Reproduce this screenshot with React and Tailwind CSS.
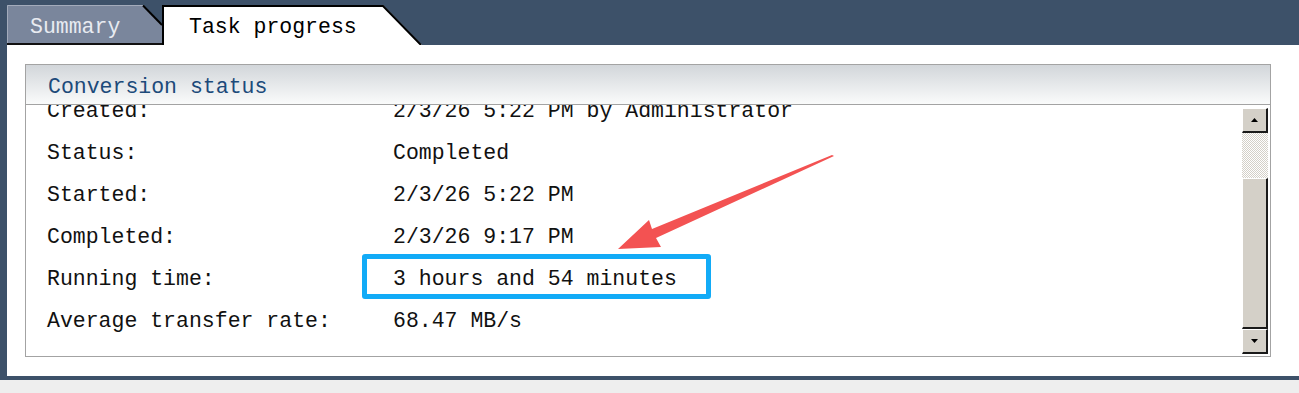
import React from "react";

const rows = [
    ["Created:", "2/3/26 5:22 PM by Administrator"],
    ["Status:", "Completed"],
    ["Started:", "2/3/26 5:22 PM"],
    ["Completed:", "2/3/26 9:17 PM"],
    ["Running time:", "3 hours and 54 minutes"],
    ["Average transfer rate:", "68.47 MB/s"],
];

// classic 3d scroll button
const ScrollButton = ({ down }) => (
    <div className="h-[25px] bg-[#d4d0c8] border-t border-l border-t-white border-l-white border-b-2 border-r-2 border-b-[#1a1a1a] border-r-[#1a1a1a] flex items-center justify-center">
        <svg width="7" height="4" viewBox="0 0 7 4">
            {down ? <polygon points="0,0 7,0 3.5,4" fill="#000" /> : <polygon points="0,4 7,4 3.5,0" fill="#000" />}
        </svg>
    </div>
);

const Tab = ({ active, width, children }) => (
    <div className="relative h-[40px] shrink-0" style={{ width }}>
        <svg className="absolute inset-0" width={width} height="40" viewBox={`0 0 ${width} 40`}>
            {active ? (
                <>
                    <polygon points={`0,0 ${width - 39},0 ${width},40 0,40`} fill="#fff" />
                    <polyline points={`1,40 1,1 ${width - 39},1 ${width - 1},40`} fill="none" stroke="#000" strokeWidth="2" />
                </>
            ) : (
                <>
                    <polygon points="0,0 136,0 155,20 155,40 0,40" fill="#7a869c" />
                    <polyline points="0.5,40 0.5,0.5 136,0.5" fill="none" stroke="#a3abbb" strokeWidth="1" />
                    <line x1="136" y1="0.5" x2="155" y2="20" stroke="#000" strokeWidth="2" />
                    <line x1="0" y1="39" x2="155" y2="39" stroke="#111" strokeWidth="2" />
                </>
            )}
        </svg>
        <span className={`relative block pt-[2px] leading-[40px] ${active ? "pl-[27px] text-black" : "pl-[23px] text-[#e8ebf1]"}`}>
            {children}
        </span>
    </div>
);

export default function App() {
    return (
        <div className="relative w-[1299px] h-[393px] bg-[#eeeeee] overflow-hidden text-[21.5px] text-[#111]" style={{ fontFamily: '"Liberation Mono", monospace' }}>
            <div className="h-[380px] bg-[#3d5169] pl-[7px] pb-[4px] flex flex-col">
                {/* tabs */}
                <div className="h-[45px] pt-[5px] flex">
                    <Tab width={155}>Summary</Tab>
                    <Tab active width={260}>Task progress</Tab>
                </div>

                {/* panel */}
                <div className="flex-1 bg-white pt-[19px] pl-[18px] pr-[28px]">
                    <div className="h-[293px] border border-[#a3a3a3] flex flex-col">
                        <div className="h-[40px] shrink-0 border-b border-[#a3a3a3] bg-gradient-to-b from-[#d2d6da] to-[#fafbfb] pl-[22px] leading-[44px] text-[#1c4a7a]">
                            Conversion status
                        </div>
                        <div className="flex-1 flex min-h-0">
                            <div className="flex-1 overflow-hidden">
                                <div className="-mt-[15px] pl-[21px]">
                                    {rows.map(([label, value]) => (
                                        <div key={label} className="h-[42px] flex items-center">
                                            <span className="w-[346px] shrink-0">{label}</span>
                                            <span>{value}</span>
                                        </div>
                                    ))}
                                </div>
                            </div>
                            {/* scrollbar */}
                            <div className="w-[26px] mr-[2px] mt-[3px] mb-[2px] flex flex-col">
                                <ScrollButton />
                                <div className="h-[45px] bg-[image:repeating-conic-gradient(#d4d0c8_0%_25%,#ffffff_0%_50%)] bg-[length:2px_2px]" />
                                <div className="flex-1 bg-[#d4d0c8] border-t border-l border-t-white border-l-white border-b-2 border-r-2 border-b-[#1a1a1a] border-r-[#1a1a1a]" />
                                <ScrollButton down />
                            </div>
                        </div>
                    </div>
                </div>
            </div>

            {/* annotation: highlight box */}
            <div className="absolute left-[362px] top-[254px] w-[349px] h-[45px] border-[5px] border-[#12abf7] rounded-[3px]" />

            {/* annotation: arrow */}
            <svg className="absolute inset-0 pointer-events-none" width="1299" height="393" viewBox="0 0 1299 393">
                <polygon points="834,156 656,238 661,247 618,249 649,220 652,229 832,155" fill="#f35252" />
            </svg>
        </div>
    );
}
